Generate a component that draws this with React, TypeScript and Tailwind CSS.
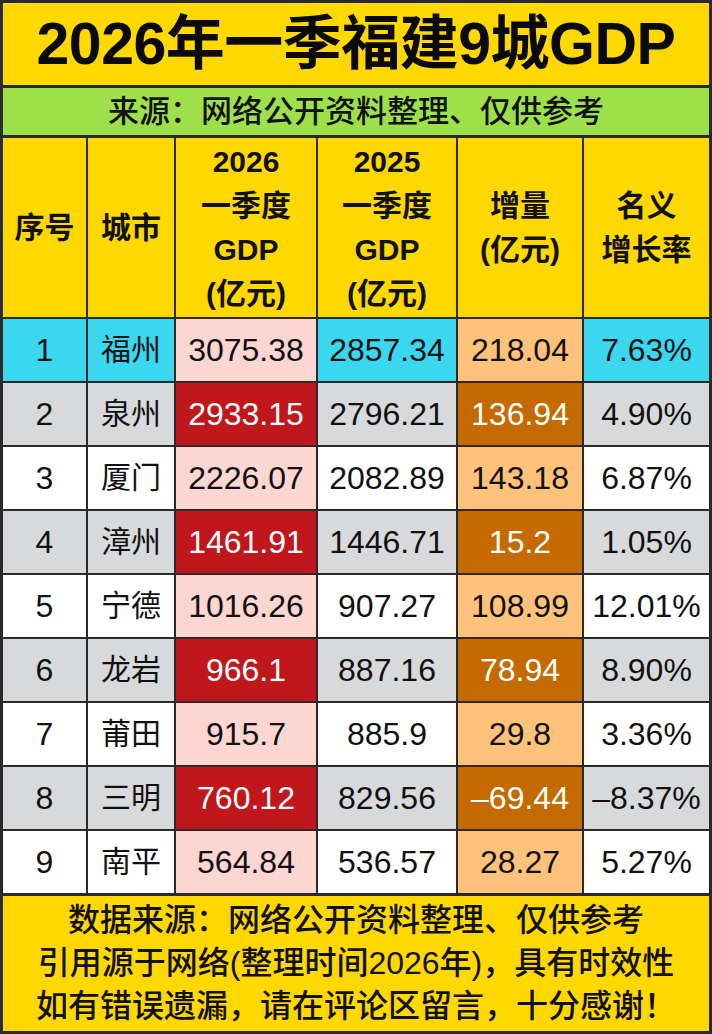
import React from "react";

const FONT = { fontFamily: '"Liberation Sans", "Noto Sans CJK SC", sans-serif' };

type Row = { no: string; city: string; a: string; b: string; d: string; r: string };

const rows: Row[] = [
  { no: "1", city: "福州", a: "3075.38", b: "2857.34", d: "218.04", r: "7.63%" },
  { no: "2", city: "泉州", a: "2933.15", b: "2796.21", d: "136.94", r: "4.90%" },
  { no: "3", city: "厦门", a: "2226.07", b: "2082.89", d: "143.18", r: "6.87%" },
  { no: "4", city: "漳州", a: "1461.91", b: "1446.71", d: "15.2", r: "1.05%" },
  { no: "5", city: "宁德", a: "1016.26", b: "907.27", d: "108.99", r: "12.01%" },
  { no: "6", city: "龙岩", a: "966.1", b: "887.16", d: "78.94", r: "8.90%" },
  { no: "7", city: "莆田", a: "915.7", b: "885.9", d: "29.8", r: "3.36%" },
  { no: "8", city: "三明", a: "760.12", b: "829.56", d: "–69.44", r: "–8.37%" },
  { no: "9", city: "南平", a: "564.84", b: "536.57", d: "28.27", r: "5.27%" },
];

function Cell({ bg, children, white, tight }: { bg: string; children: React.ReactNode; white?: boolean; tight?: boolean }) {
  return (
    <div
      className={`${bg} h-[62px] flex items-center justify-center ${white ? "text-white" : "text-[#111]"} ${tight ? "text-[30px]" : "text-[32px]"} leading-none whitespace-nowrap`}
    >
      {children}
    </div>
  );
}

export default function App() {
  return (
    <div style={FONT} className="w-[712px] h-[1034px] bg-[#2a2a2a] p-[3px] flex flex-col gap-[3px] overflow-hidden">
      <div className="h-[82px] bg-[#FFD800] flex items-center justify-center text-[59px] font-bold text-[#0a0a0a] leading-none tracking-[-0.5px]">
        2026年一季福建9城GDP
      </div>
      <div className="h-[47px] bg-[#9EE04A] flex items-center justify-center text-[31px] font-medium text-[#111] leading-none">
        来源：网络公开资料整理、仅供参考
      </div>
      <div className="grid grid-cols-[83px_86px_140px_138px_124px_125px] gap-[2px]">
        <div className="h-[179px] bg-[#FFD800] flex items-center justify-center text-[30px] font-bold text-[#111]">序号</div>
        <div className="h-[179px] bg-[#FFD800] flex items-center justify-center text-[30px] font-bold text-[#111]">城市</div>
        <div className="h-[179px] bg-[#FFD800] flex flex-col items-center justify-center text-[30px] font-bold text-[#111] leading-[44px]">
          <span>2026</span>
          <span>一季度</span>
          <span>GDP</span>
          <span>(亿元)</span>
        </div>
        <div className="h-[179px] bg-[#FFD800] flex flex-col items-center justify-center text-[30px] font-bold text-[#111] leading-[44px]">
          <span>2025</span>
          <span>一季度</span>
          <span>GDP</span>
          <span>(亿元)</span>
        </div>
        <div className="h-[179px] bg-[#FFD800] flex flex-col items-center justify-center text-[30px] font-bold text-[#111] leading-[44px]">
          <span>增量</span>
          <span>(亿元)</span>
        </div>
        <div className="h-[179px] bg-[#FFD800] flex flex-col items-center justify-center text-[30px] font-bold text-[#111] leading-[44px]">
          <span>名义</span>
          <span>增长率</span>
        </div>
        {rows.map((r, i) => {
          const first = i === 0;
          const even = i % 2 === 1;
          const base = first ? "bg-[#3AD7EF]" : even ? "bg-[#D8D9DB]" : "bg-white";
          const c3 = even ? "bg-[#C0171D]" : "bg-[#FDD5D1]";
          const c5 = even ? "bg-[#C46A00]" : "bg-[#FFC27A]";
          return (
            <React.Fragment key={r.no}>
              <Cell bg={base}>{r.no}</Cell>
              <Cell bg={base} tight>{r.city}</Cell>
              <Cell bg={c3} white={even}>{r.a}</Cell>
              <Cell bg={base}>{r.b}</Cell>
              <Cell bg={c5} white={even}>{r.d}</Cell>
              <Cell bg={base}>{r.r}</Cell>
            </React.Fragment>
          );
        })}
      </div>
      <div className="flex-1 bg-[#FFD800] flex flex-col items-center justify-center text-[32px] font-medium text-[#111] leading-[43px]">
        <span>数据来源：网络公开资料整理、仅供参考</span>
        <span>引用源于网络(整理时间2026年)，具有时效性</span>
        <span>如有错误遗漏，请在评论区留言，十分感谢！</span>
      </div>
    </div>
  );
}
